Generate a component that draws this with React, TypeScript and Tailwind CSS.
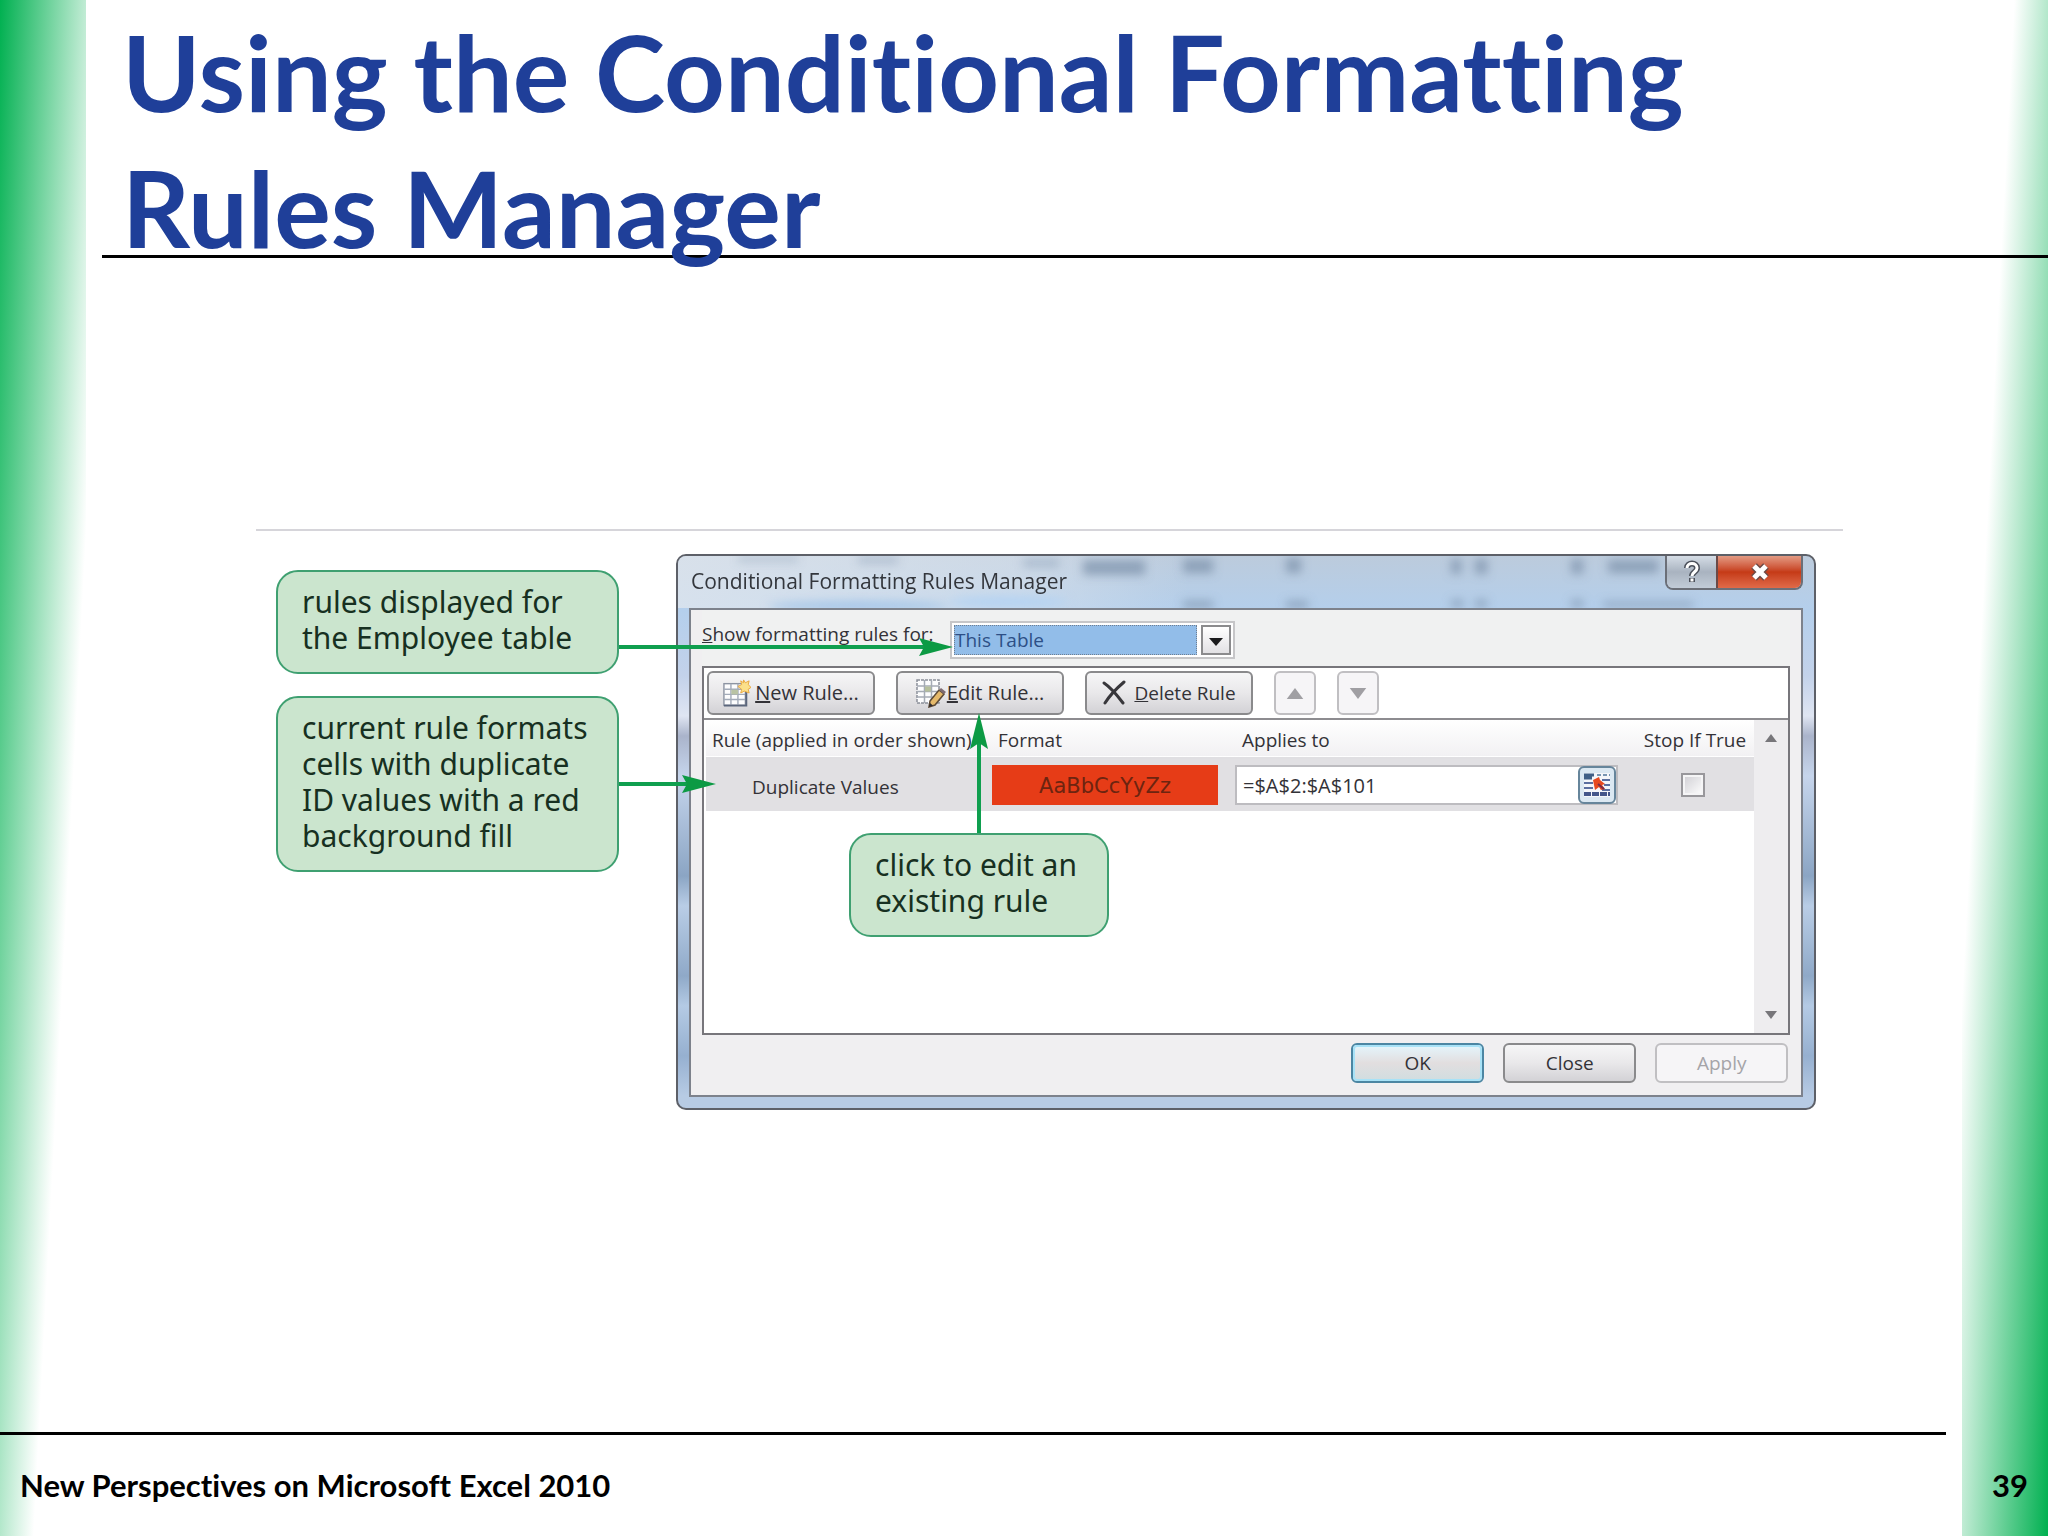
import { type ReactNode } from "react";

const dialogButton =
    "flex items-center justify-center rounded-md border-2 border-[#8a8a8c] bg-linear-to-b from-[#f6f6f7] via-[#e9e8ea] via-50% to-[#d3d2d6] text-[#333237]";
const disabledButton =
    "flex items-center justify-center rounded-md border-2 border-[#c0bfc2] bg-[#f6f5f7] text-[#a5a4a8]";

const Callout = ({ className, children }: { className?: string; children: ReactNode }) => (
    <div
        className={`rounded-[22px] border-2 border-[#3fa071] bg-[#cbe5ce] px-6 pt-3 text-[30px] leading-9 whitespace-nowrap text-[#173021] ${className ?? ""}`}
    >
        {children}
    </div>
);

const NewRuleIcon = () => (
    <svg width="28" height="28" viewBox="0 0 30 30">
        <rect x="1" y="5" width="23" height="23" fill="#fdfdfe" stroke="#8d94a2" strokeWidth="1.5" />
        <path d="M1 11h23M1 16.500h23M1 22h23M8.500 5v23M16 5v23" stroke="#a3abb9" strokeWidth="1.500" />
        <rect x="9" y="11.500" width="7" height="5" fill="#b9c3a4" />
        <path d="M1 28.500h24V14" stroke="#5b667c" strokeWidth="2" fill="none" />
        <path d="M22 1l2 3 4-2-1 4 3 3-3 2 1 4-5-2-4 2 1-4-4-3 4-2-1-4 3 2z" fill="#fbe08a" stroke="#e9a73c" />
    </svg>
);

const EditRuleIcon = () => (
    <svg width="30" height="30" viewBox="0 0 30 30">
        <rect x="1" y="2" width="22" height="23" fill="#fdfdfe" stroke="#8a8f99" strokeWidth="1.500" strokeDasharray="3 1" />
        <path d="M1 8h22M1 13.500h22M1 19h22M8.500 2v23M15.500 2v23" stroke="#a5abb5" strokeWidth="1.500" />
        <rect x="9" y="8.500" width="6" height="5" fill="#b5bf9c" />
        <path d="M14 23l9-11 5 4-9 11-6 2z" fill="#e5b96b" stroke="#5d4a36" strokeWidth="1.500" />
        <path d="M23 12l2-2 5 4-2 2z" fill="#7d6a72" />
        <path d="M13 29l1-4 3 2.500z" fill="#2f2c30" />
    </svg>
);

const DeleteIcon = () => (
    <svg width="24" height="26" viewBox="0 0 24 26" fill="none" stroke="#38373b" strokeLinecap="round">
        <path d="M2 3c6 4 13 12 19 20" strokeWidth="3" />
        <path d="M22 2C15 8 8 15 3 23" strokeWidth="3" />
    </svg>
);

const RangeIcon = () => (
    <svg width="28" height="26" viewBox="0 0 28 26">
        <rect x="1" y="1" width="26" height="24" fill="#f4f6fa" />
        <path d="M1 3h10M1 6h8" stroke="#3f5f86" strokeWidth="3" />
        <path d="M14 3h13" stroke="#7895b2" strokeWidth="2" strokeDasharray="4 2" />
        <path d="M1 11h9M1 16h9M19 8h8M21 13h6M19 18h8" stroke="#5b6fa0" strokeWidth="2" />
        <path d="M1 22h26" stroke="#44568a" strokeWidth="4" strokeDasharray="7 1" />
        <path d="M10 8l6-3 1 3 5 4-3 1 3 4-4 1-2-3-4 3-1-5z" fill="#e8491f" />
        <path d="M15 12l6 5" stroke="#7c2c48" strokeWidth="2" />
    </svg>
);

// Blurred sheet content showing through the glass title bar
const GlassSmudges = () => (
    <svg className="absolute inset-0 h-full w-full" viewBox="0 0 1136 52" preserveAspectRatio="none" aria-hidden="true">
        <defs>
            <filter id="soft" x="-30%" y="-60%" width="160%" height="220%">
                <feGaussianBlur stdDeviation="5" />
            </filter>
            <linearGradient id="haze" x1="0" x2="1" y1="0" y2="0">
                <stop offset="0" stopColor="#dfe6ee" stopOpacity="0.8" />
                <stop offset="0.3" stopColor="#dfe6ee" stopOpacity="0.5" />
                <stop offset="0.45" stopColor="#dfe6ee" stopOpacity="0" />
            </linearGradient>
        </defs>
        <rect width="1136" height="52" fill="url(#haze)" />
        <g filter="url(#soft)">
            <ellipse cx="180" cy="50" rx="90" ry="5" fill="#a5c6e8" />
            <ellipse cx="330" cy="46" rx="60" ry="6" fill="#b5d3f2" />
            <g fill="#7e93ad" opacity="0.75">
                <rect x="60" y="0" width="60" height="6" opacity="0.5" />
                <rect x="180" y="0" width="40" height="8" opacity="0.5" />
                <rect x="345" y="3" width="36" height="8" opacity="0.6" />
                <rect x="405" y="4" width="62" height="15" />
                <rect x="505" y="3" width="30" height="14" />
                <rect x="608" y="2" width="15" height="15" />
                <rect x="773" y="3" width="10" height="15" />
                <rect x="797" y="3" width="12" height="15" />
                <rect x="893" y="3" width="12" height="15" />
                <rect x="930" y="4" width="50" height="13" />
                <rect x="505" y="45" width="30" height="7" />
                <rect x="608" y="45" width="22" height="7" />
                <rect x="773" y="44" width="12" height="7" />
                <rect x="797" y="44" width="12" height="7" />
                <rect x="893" y="44" width="12" height="7" />
                <rect x="925" y="46" width="90" height="5" />
            </g>
        </g>
    </svg>
);

const RulesTable = () => (
    <table className="w-full table-fixed border-collapse text-left">
        <colgroup>
            <col className="w-[280px]" />
            <col className="w-[244px]" />
            <col />
            <col className="w-[124px]" />
        </colgroup>
        <thead>
            <tr className="h-[38px] border-b-2 border-[#e0dfe2] bg-linear-to-b from-white to-[#f2f1f3]">
                <th className="pt-1 pl-[6px] font-normal whitespace-nowrap">Rule (applied in order shown)</th>
                <th className="pt-1 pl-3 font-normal">Format</th>
                <th className="pt-1 pl-3 font-normal">Applies to</th>
                <th className="pt-1 pr-2 text-right font-normal whitespace-nowrap">Stop If True</th>
            </tr>
        </thead>
        <tbody>
            <tr className="h-[53px] bg-[#e1e0e3]">
                <td className="pt-1 pl-[46px]">Duplicate Values</td>
                <td className="px-[6px]">
                    <div className="mr-[6px] flex h-10 items-center justify-center bg-[#e63c17] pt-1 font-['DejaVu_Sans',sans-serif] text-[21px] text-[#6d2410]">
                        AaBbCcYyZz
                    </div>
                </td>
                <td className="pl-[5px]">
                    <div className="mr-3 flex h-10 border-2 border-[#bdbcc0] bg-white">
                        <input
                            aria-label="Applies to"
                            defaultValue="=$A$2:$A$101"
                            className="min-w-0 flex-1 bg-transparent pt-[2px] pl-[6px] text-[20px] outline-none"
                        />
                        <button
                            aria-label="Select range"
                            className="-my-px flex w-[38px] items-center justify-center rounded-md border-2 border-[#66859b] bg-[#dbe8f2]"
                        >
                            <RangeIcon />
                        </button>
                    </div>
                </td>
                <td className="pl-[51px]">
                    <input
                        type="checkbox"
                        aria-label="Stop If True"
                        className="block h-6 w-6 appearance-none border-2 border-[#98979b] bg-linear-to-br from-[#cfced3] to-white outline-2 -outline-offset-4 outline-[#f5f5f6]"
                    />
                </td>
            </tr>
        </tbody>
    </table>
);

const RulesDialog = () => (
    <section
        aria-label="Conditional Formatting Rules Manager"
        className="relative flex h-[556px] min-w-0 flex-1 flex-col rounded-[10px] border-2 border-[#5d6068] bg-[linear-gradient(#bccbdc_0px,#b4cfec_54px,#c3d2ea_120px,#dfe5f2_160px,#aab4cb_180px,#c6d5ec_220px,#8ba5c4_320px,#b9cde6_350px,#8fa9c8_420px,#b4cae4_450px,#96b0d0_500px,#b7cbe4_540px)] px-[11px] pb-[11px]"
    >
        <div className="relative -mx-[11px] flex h-[52px] shrink-0 items-start justify-between overflow-hidden rounded-t-[8px] pr-[11px]">
            <GlassSmudges />
            <h2 className="relative pt-[9px] pl-[13px] font-['Open_Sans',sans-serif] text-[21px] leading-8 text-[#33363c]">
                Conditional Formatting Rules Manager
            </h2>
            <div className="relative flex h-[34px] overflow-hidden rounded-b-[8px] border-2 border-t-0 border-[#6b6f78]">
                <button
                    aria-label="Help"
                    className="flex w-[49px] items-center justify-center bg-linear-to-b from-[#d5dde6] via-[#a9b3c0] via-50% to-[#c2ccd8]"
                >
                    <svg width="18" height="24" viewBox="0 0 18 24" fill="none">
                        <path d="M4 8c0-6 10-6 10 0 0 4-5 4-5 8M9 18v4" stroke="#4c515b" strokeWidth="6" />
                        <path d="M4 8c0-6 10-6 10 0 0 4-5 4-5 8M9 18.500v3" stroke="#fff" strokeWidth="3" />
                    </svg>
                </button>
                <button
                    aria-label="Close window"
                    className="flex w-[85px] items-center justify-center border-l-2 border-[#6b4a48] bg-linear-to-b from-[#e39a83] via-[#c53a16] via-50% to-[#e06a48]"
                >
                    <svg width="22" height="20" viewBox="0 0 22 20" fill="none">
                        <path d="M5 4l12 12M17 4L5 16" stroke="#6e4a46" strokeWidth="8" />
                        <path d="M5 4l12 12M17 4L5 16" stroke="#fff" strokeWidth="5" />
                    </svg>
                </button>
            </div>
        </div>

        <div className="flex flex-1 flex-col border-2 border-[#7d828c] bg-[#f0eff1] px-[11px] pb-3 text-[#333237]">
            <div className="flex h-14 shrink-0 items-start bg-[#f0f1f1]">
                <label htmlFor="scope" className="w-[248px] pt-2 leading-8 whitespace-nowrap">
                    <u>S</u>how formatting rules for:
                </label>
                <div className="relative mt-[11px] flex h-[38px] w-[285px] border-2 border-[#c6c6c8] bg-white p-[2px]">
                    <select
                        id="scope"
                        className="min-w-0 flex-1 appearance-none border border-dotted border-[#6f7f92] bg-[#92bde9] text-[#2d4f86]"
                    >
                        <option>This Table</option>
                    </select>
                    <div className="pointer-events-none ml-1 flex w-[30px] items-center justify-center border-2 border-[#8b8b8d] bg-linear-to-b from-white to-[#e2e1e4]">
                        <svg className="mt-1" width="14" height="8" viewBox="0 0 14 8">
                            <path d="M0 0h14L7 8z" fill="#1b1b1d" />
                        </svg>
                    </div>
                </div>
            </div>

            <div className="flex flex-1 flex-col border-2 border-[#77767b] bg-white">
                <div className="flex h-[52px] items-center gap-[21px] border-b-2 border-[#8d8c90] pl-[3px]">
                    <button className={`${dialogButton} h-11 w-[168px] gap-1 text-[20px]`}>
                        <NewRuleIcon />
                        <span>
                            <u>N</u>ew Rule...
                        </span>
                    </button>
                    <button className={`${dialogButton} h-11 w-[168px] gap-px text-[20px]`}>
                        <EditRuleIcon />
                        <span>
                            <u>E</u>dit Rule...
                        </span>
                    </button>
                    <button className={`${dialogButton} h-11 w-[168px] gap-2`}>
                        <DeleteIcon />
                        <span>
                            <u>D</u>elete Rule
                        </span>
                    </button>
                    <button aria-label="Move up" className={`${disabledButton} h-11 w-[42px]`}>
                        <svg width="18" height="11" viewBox="0 0 18 12">
                            <path d="M0 12h18L9 0z" fill="#a09fa3" />
                        </svg>
                    </button>
                    <button aria-label="Move down" className={`${disabledButton} h-11 w-[42px]`}>
                        <svg width="18" height="11" viewBox="0 0 18 12">
                            <path d="M0 0h18L9 12z" fill="#a09fa3" />
                        </svg>
                    </button>
                </div>
                <div className="flex flex-1">
                    <div className="min-w-0 flex-1 pl-[2px]">
                        <RulesTable />
                    </div>
                    <div className="flex w-[34px] flex-col items-center justify-between bg-[#eeedef] pt-[14px] pb-[14px]">
                        <svg width="12" height="8" viewBox="0 0 12 8">
                            <path d="M0 8h12L6 0z" fill="#77767a" />
                        </svg>
                        <svg width="12" height="8" viewBox="0 0 12 8">
                            <path d="M0 0h12L6 8z" fill="#77767a" />
                        </svg>
                    </div>
                </div>
            </div>

            <div className="flex shrink-0 justify-end gap-[19px] pt-2 pr-[2px]">
                <button className="flex h-10 w-[133px] items-center justify-center rounded-md border-2 border-[#4c86a3] bg-linear-to-b from-[#e4f6fd] via-[#e2dedf] via-50% to-[#d0dde0] outline-2 -outline-offset-4 outline-[#a8e2f7]">
                    OK
                </button>
                <button className={`${dialogButton} h-10 w-[133px]`}>Close</button>
                <button className={`${disabledButton} h-10 w-[133px]`}>Apply</button>
            </div>
        </div>

        <div className="absolute top-[277px] left-[171px] font-['Noto_Sans',sans-serif]">
            <Callout className="h-[104px] w-[260px]">
                click to edit an
                <br />
                existing rule
            </Callout>
            <svg className="absolute bottom-full left-[119px]" width="22" height="120" viewBox="0 0 22 120">
                <path d="M11 120V24" stroke="#0f9f4f" strokeWidth="4" />
                <path d="M11 0l9 36-9-6-9 6z" fill="#0c9a44" />
            </svg>
        </div>
    </section>
);

const App = () => {
    return (
        <div className="flex min-h-screen flex-col bg-white bg-[linear-gradient(93deg,#00b050_0px,#fff_114px),linear-gradient(273deg,#00b050_0px,#fff_114px)] bg-[length:86px_100%,86px_100%] bg-[position:left_top,right_top] bg-no-repeat font-['Lato',sans-serif] [font-variant-ligatures:no-common-ligatures]">
            <header className="ml-[102px] h-[258px] border-b-3 border-black pt-[3px] pl-5">
                <h1 className="text-[106px] leading-[136px] font-bold whitespace-nowrap text-[#1f3f99]">
                    Using the Conditional Formatting
                    <br />
                    Rules Manager
                </h1>
            </header>

            <main className="flex-1 pt-[271px]">
                <figure className="mr-[10%] ml-[12.5%] flex border-t-2 border-[#d6d5da] pt-[23px] pr-[27px] pl-5">
                    <div className="relative z-10 flex w-[343px] shrink-0 flex-col gap-[22px] pt-4 font-['Noto_Sans',sans-serif]">
                        <div className="relative">
                            <Callout className="h-[104px]">
                                rules displayed for
                                <br />
                                the Employee table
                            </Callout>
                            <svg className="absolute top-[66px] left-full" width="334" height="22" viewBox="0 0 334 22">
                                <path d="M0 11h310" stroke="#0f9f4f" strokeWidth="4" />
                                <path d="M334 11l-34 9 5-9-5-9z" fill="#0c9a44" />
                            </svg>
                        </div>
                        <div className="relative">
                            <Callout className="h-[176px]">
                                current rule formats
                                <br />
                                cells with duplicate
                                <br />
                                ID values with a red
                                <br />
                                background fill
                            </Callout>
                            <svg className="absolute top-[77px] left-full" width="97" height="22" viewBox="0 0 97 22">
                                <path d="M0 11h75" stroke="#0f9f4f" strokeWidth="4" />
                                <path d="M97 11l-34 9 5-9-5-9z" fill="#0c9a44" />
                            </svg>
                        </div>
                    </div>
                    <div className="ml-[57px] flex min-w-0 flex-1 font-['Open_Sans',sans-serif] text-[19px]">
                        <RulesDialog />
                    </div>
                </figure>
            </main>

            <footer className="h-[104px]">
                <hr className="mr-[102px] border-t-3 border-black" />
                <div className="flex justify-between px-5 pt-8 text-[31px] leading-9 font-bold text-black">
                    <p>New Perspectives on Microsoft Excel 2010</p>
                    <p>39</p>
                </div>
            </footer>
        </div>
    );
};

export default App;
